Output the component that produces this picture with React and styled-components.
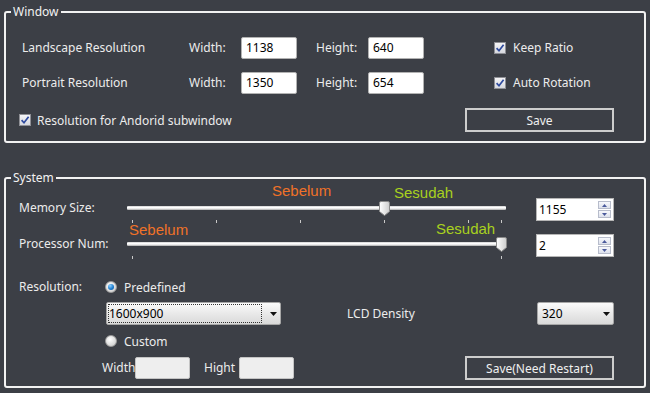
import React from 'react';
import styled, { createGlobalStyle } from 'styled-components';

const GlobalStyle = createGlobalStyle`
  html, body {
    margin: 0;
    padding: 0;
    background: #3c3f46;
  }
  body {
    font-family: "Noto Sans", "Liberation Sans", sans-serif;
    font-size: 12px;
    color: #ececec;
  }
`;

const Page = styled.div`
  width: 650px;
  height: 393px;
  box-sizing: border-box;
  padding: 4px 4px 0;
  display: flex;
  flex-direction: column;
  gap: 27px;
  overflow: hidden;
`;

const Group = styled.fieldset`
  margin: 0;
  padding: 0;
  min-width: 0;
  border: 2px solid #f2f2f2;
  border-radius: 3px;
`;

const Legend = styled.legend`
  margin-left: 5px;
  padding: 0 2px;
  line-height: 16px;
  font-size: 12px;
  color: #f2f2f2;
`;

const Body = styled.div`
  display: flex;
  flex-direction: column;
  padding: ${p => p.$pad};
`;

const Row = styled.div`
  display: flex;
  align-items: ${p => p.$align || 'center'};
  height: ${p => p.$h}px;
  margin-top: ${p => p.$mt || 0}px;
  padding-left: ${p => p.$pl || 0}px;
`;

const Cell = styled.span`
  flex: none;
  width: ${p => p.$w}px;
  line-height: 16px;
  white-space: nowrap;
`;

const Spacer = styled.span`
  flex: none;
  width: ${p => p.$w}px;
`;

const TextBox = styled.input`
  flex: none;
  width: ${p => p.$w}px;
  height: 22px;
  box-sizing: border-box;
  margin: 0;
  padding: 0 4px;
  border: 1px solid ${p => (p.$grey ? '#c4c4c4' : '#b2b2b2')};
  border-radius: 2px;
  background: ${p => (p.$grey ? '#eeeeee' : '#ffffff')};
  color: #000;
  font: 12px "Noto Sans", "Liberation Sans", sans-serif;
  outline: none;
`;

const CheckLabel = styled.label`
  display: flex;
  align-items: center;
  gap: ${p => p.$gap || 7}px;
  white-space: nowrap;
`;

const CheckBox = styled.span`
  flex: none;
  width: 12px;
  height: 12px;
  box-sizing: border-box;
  border: 1px solid #8f9096;
  background: linear-gradient(#f5f5f7, #d6d8de);
  display: flex;
  align-items: center;
  justify-content: center;
`;

const RadioDot = styled.span`
  flex: none;
  width: 12px;
  height: 12px;
  box-sizing: border-box;
  border-radius: 50%;
  border: 1px solid #9c9c9c;
  background: radial-gradient(circle at 40% 35%, #ffffff, #c4c4c4);
  display: flex;
  align-items: center;
  justify-content: center;
  &::after {
    content: '';
    display: ${p => (p.$on ? 'block' : 'none')};
    width: 6px;
    height: 6px;
    border-radius: 50%;
    background: radial-gradient(circle at 35% 30%, #8fd0ff, #1f7fd0 55%, #0b4f93);
  }
`;

const Button = styled.button`
  flex: none;
  margin-left: auto;
  width: 149px;
  height: 24px;
  box-sizing: border-box;
  padding: 0;
  border: 2px solid #cdcdcd;
  background: #3c3f46;
  color: #f0f0f0;
  font: 12px "Noto Sans", "Liberation Sans", sans-serif;
`;

const SliderBox = styled.div`
  flex: none;
  position: relative;
  width: 379px;
  height: 24px;
`;

const TrackLane = styled.div`
  height: 16px;
  display: flex;
  align-items: center;
`;

const Track = styled.div`
  flex: 1;
  height: 4px;
  border-radius: 1px;
  background: linear-gradient(#cfcfcf, #ffffff 35%, #f0f0f0 60%, #a9a9a9);
`;

const Thumb = styled.svg`
  position: absolute;
  top: 1px;
`;

const Tick = styled.span`
  position: absolute;
  top: 20px;
  width: 1px;
  height: 3px;
  background: #c9c9c9;
`;

const Note = styled.span`
  position: absolute;
  top: ${p => p.$top}px;
  left: ${p => p.$left}px;
  font: 15px/16px "Liberation Sans", "DejaVu Sans", sans-serif;
  color: ${p => (p.$after ? '#a8d11e' : '#f07228')};
  white-space: nowrap;
  pointer-events: none;
`;

const Spin = styled.div`
  flex: none;
  width: 78px;
  height: 23px;
  box-sizing: border-box;
  margin-top: -2px;
  padding: 0 2px 0 2px;
  border: 1px solid #b6b6b6;
  background: #fff;
  display: flex;
  align-items: center;
`;

const SpinText = styled.span`
  flex: 1;
  color: #000;
  font-size: 12px;
`;

const SpinButtons = styled.div`
  display: flex;
  flex-direction: column;
  gap: 1px;
`;

const SpinBtn = styled.div`
  width: 13px;
  height: 8px;
  box-sizing: border-box;
  border: 1px solid #b7bccb;
  background: linear-gradient(#f7f8fc, #dde1ec);
  display: flex;
  align-items: center;
  justify-content: center;
`;

const Combo = styled.div`
  flex: none;
  width: ${p => p.$w}px;
  height: 23px;
  box-sizing: border-box;
  padding: 0 3px 0 1px;
  border: 1px solid #a7a7a7;
  border-radius: 2px;
  background: linear-gradient(#fbfbfb, #ebebeb 45%, #d9d9d9);
  color: #000;
  display: flex;
  align-items: center;
`;

const ComboText = styled.span`
  flex: 1;
  height: 19px;
  box-sizing: border-box;
  margin-right: 8px;
  padding-left: ${p => (p.$focus ? 0 : 2)}px;
  border: 1px dotted ${p => (p.$focus ? '#333' : 'transparent')};
  line-height: 17px;
`;

const Arrow = ({ color = '#111', w = 7, h = 4 }) => (
  <svg width={w} height={h} viewBox={`0 0 ${w} ${h}`}>
    <polygon points={`0,0 ${w},0 ${w / 2},${h}`} fill={color} />
  </svg>
);

const CheckMark = () => (
  <svg width="10" height="10" viewBox="0 0 10 10">
    <path d="M1.6 5.2 L4 7.8 L8.6 1.8" fill="none" stroke="#2e4a9e" strokeWidth="1.7" />
  </svg>
);

const Check = ({ children, gap }) => (
  <CheckLabel $gap={gap}>
    <CheckBox>
      <CheckMark />
    </CheckBox>
    {children}
  </CheckLabel>
);

const Radio = ({ on, children }) => (
  <CheckLabel>
    <RadioDot $on={on} />
    {children}
  </CheckLabel>
);

const SPAN = 369;
const START = 5;

const Slider = ({ value, min, max, step, notes }) => {
  const pos = v => START + ((v - min) / (max - min)) * SPAN;
  const ticks = [];
  for (let v = min; v < max; v += step) ticks.push(pos(v));
  ticks.push(pos(max));
  return (
    <SliderBox>
      <TrackLane>
        <Track />
      </TrackLane>
      <Thumb width="11" height="15" viewBox="0 0 11 15" style={{ left: pos(value) - 5.5 }}>
        <defs>
          <linearGradient id={`tg${max}`} x1="0" y1="0" x2="1" y2="0">
            <stop offset="0" stopColor="#ffffff" />
            <stop offset="1" stopColor="#cdcdcd" />
          </linearGradient>
        </defs>
        <path
          d="M0.5 2 Q0.5 0.5 2 0.5 H9 Q10.5 0.5 10.5 2 V10.5 L5.5 14.5 L0.5 10.5 Z"
          fill={`url(#tg${max})`}
          stroke="#8a8a8a"
        />
      </Thumb>
      {ticks.map((x, i) => (
        <Tick key={i} style={{ left: Math.round(x) }} />
      ))}
      {notes.map(n => (
        <Note key={n.text} $left={n.left} $top={n.top} $after={n.after}>
          {n.text}
        </Note>
      ))}
    </SliderBox>
  );
};

const SpinBox = ({ value }) => (
  <Spin>
    <SpinText>{value}</SpinText>
    <SpinButtons>
      <SpinBtn>
        <svg width="5" height="3" viewBox="0 0 5 3">
          <polygon points="0,3 5,3 2.5,0" fill="#4b5a9c" />
        </svg>
      </SpinBtn>
      <SpinBtn>
        <svg width="5" height="3" viewBox="0 0 5 3">
          <polygon points="0,0 5,0 2.5,3" fill="#4b5a9c" />
        </svg>
      </SpinBtn>
    </SpinButtons>
  </Spin>
);

export default function App() {
  return (
    <>
      <GlobalStyle />
      <Page>
        <Group>
          <Legend>Window</Legend>
          <Body $pad="16px 30px 9px 13px">
            <Row $h={23} $pl={3}>
              <Cell $w={167}>Landscape Resolution</Cell>
              <Cell $w={52}>Width:</Cell>
              <TextBox $w={56} defaultValue="1138" />
              <Spacer $w={19} />
              <Cell $w={52}>Height:</Cell>
              <TextBox $w={56} defaultValue="640" />
              <Spacer $w={70} />
              <Check>Keep Ratio</Check>
            </Row>
            <Row $h={23} $pl={3} $mt={12}>
              <Cell $w={167}>Portrait Resolution</Cell>
              <Cell $w={52}>Width:</Cell>
              <TextBox $w={56} defaultValue="1350" />
              <Spacer $w={19} />
              <Cell $w={52}>Height:</Cell>
              <TextBox $w={56} defaultValue="654" />
              <Spacer $w={70} />
              <Check>Auto Rotation</Check>
            </Row>
            <Row $h={24} $mt={14}>
              <Check gap={6}>Resolution for Andorid subwindow</Check>
              <Button>Save</Button>
            </Row>
          </Body>
        </Group>

        <Group>
          <Legend>System</Legend>
          <Body $pad="14px 30px 6px 13px">
            <Row $h={24} $align="flex-start">
              <Cell $w={108}>Memory Size:</Cell>
              <Slider
                value={1155}
                min={0}
                max={1687}
                step={384}
                notes={[
                  { text: 'Sebelum', left: 145, top: -17 },
                  { text: 'Sesudah', left: 267, top: -15, after: true },
                ]}
              />
              <Spacer $w={30} />
              <SpinBox value="1155" />
            </Row>
            <Row $h={24} $align="flex-start" $mt={12}>
              <Cell $w={108}>Processor Num:</Cell>
              <Slider
                value={2}
                min={1}
                max={2}
                step={1}
                notes={[
                  { text: 'Sebelum', left: 2, top: -14 },
                  { text: 'Sesudah', left: 309, top: -15, after: true },
                ]}
              />
              <Spacer $w={30} />
              <SpinBox value="2" />
            </Row>
            <Row $h={16} $mt={19}>
              <Cell $w={86}>Resolution:</Cell>
              <Radio on>Predefined</Radio>
            </Row>
            <Row $h={23} $mt={7}>
              <Spacer $w={87} />
              <Combo $w={175}>
                <ComboText $focus>1600x900</ComboText>
                <Arrow />
              </Combo>
              <Spacer $w={66} />
              <Cell $w={190}>LCD Density</Cell>
              <Combo $w={77}>
                <ComboText>320</ComboText>
                <Arrow />
              </Combo>
            </Row>
            <Row $h={16} $mt={8}>
              <Spacer $w={86} />
              <Radio>Custom</Radio>
            </Row>
            <Row $h={24} $mt={7}>
              <Spacer $w={83} />
              <Cell $w={33}>Width</Cell>
              <TextBox $w={55} $grey />
              <Spacer $w={14} />
              <Cell $w={35}>Hight</Cell>
              <TextBox $w={55} $grey />
              <Button>Save(Need Restart)</Button>
            </Row>
          </Body>
        </Group>
      </Page>
    </>
  );
}
